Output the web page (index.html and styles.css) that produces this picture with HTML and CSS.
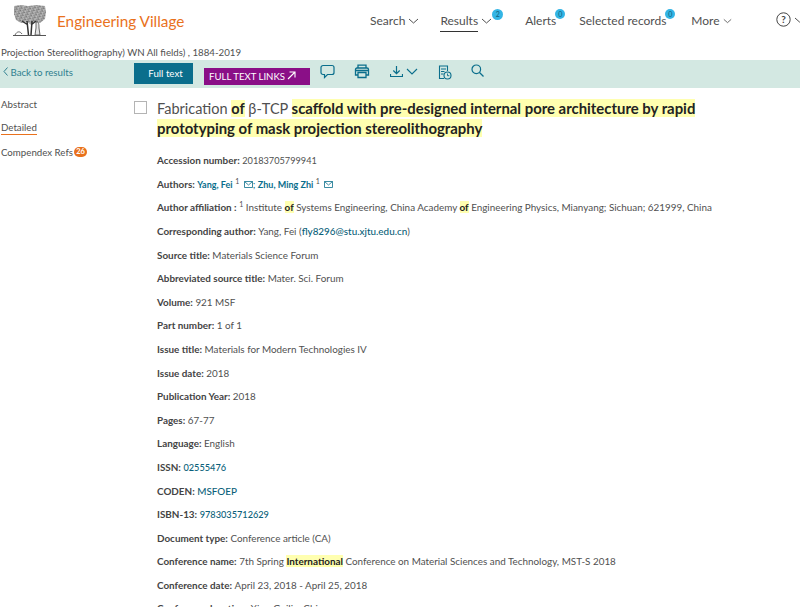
FILE: index.html
```html
<!DOCTYPE html>
<html lang="en">
<head>
<meta charset="utf-8">
<title>Engineering Village</title>
<link rel="stylesheet" href="styles.css">
</head>
<body>
<header class="top">
  <div class="brand">
    <svg class="tree" width="35" height="33" viewBox="0 0 35 33" aria-hidden="true">
      <defs>
        <pattern id="leaf" width="4" height="3" patternUnits="userSpaceOnUse" patternTransform="rotate(25)">
          <rect width="4" height="3" fill="#bdbdbd"/>
          <path d="M0 1h2.500M1.500 2.500h2" stroke="#555" stroke-width=".8"/>
        </pattern>
      </defs>
      <path d="M2 2l6-1 8 1 9-1 8 1 1 6-1 7-5 4-6-1-4 2-3-2-6 1-5-3-2-6z" fill="url(#leaf)"/>
      <path d="M15 17l1.500 14M20 17l-1 14M16 21l-6-4M19 21l5-4" fill="none" stroke="#333" stroke-width="1.500"/>
      <path d="M24 18c3-1 3 3 3 6l1 7h-5l1-7z" fill="#e4e4e4" stroke="#444" stroke-width=".8"/>
      <path d="M1 31.500h33" stroke="#555"/>
      <path d="M3 31c2-4 5-4 7-1" fill="none" stroke="#666"/>
    </svg>
    <span class="brand-name">Engineering Village</span>
  </div>
  <nav class="nav">
    <a class="nav-item nav-search">Search <svg class="chev" width="11" height="6" viewBox="0 0 11 6"><path d="M1 1l4.500 4 4.500-4"/></svg></a>
    <a class="nav-item nav-results"><span class="current">Results</span> <svg class="chev" width="11" height="6" viewBox="0 0 11 6"><path d="M1 1l4.500 4 4.500-4"/></svg><span class="count">2</span></a>
    <a class="nav-item nav-alerts">Alerts<span class="count">0</span></a>
    <a class="nav-item nav-selected">Selected records<span class="count">0</span></a>
    <a class="nav-item">More <svg class="chev" width="9" height="6" viewBox="0 0 11 6"><path d="M1 1l4.500 4 4.500-4"/></svg></a>
    <a class="nav-item help">
      <svg width="15" height="15" viewBox="0 0 15 15"><circle cx="7.500" cy="7.500" r="6.700" fill="none" stroke="#444" stroke-width="1"/><text x="7.500" y="11" text-anchor="middle" class="help-q">?</text></svg>
      <svg class="chev" width="11" height="6" viewBox="0 0 11 6"><path d="M1 1l4.500 4 4.500-4"/></svg>
    </a>
  </nav>
</header>

<p class="query">Projection Stereolithography) WN All fields) , 1884-2019</p>

<div class="toolbar">
  <a class="back"><svg width="5" height="9" viewBox="0 0 5 9"><path d="M4.500 .5L1 4.500l3.500 4" fill="none" stroke="#2f7f8f"/></svg> Back to results</a>
  <a class="btn-full">Full text</a>
  <a class="btn-links">FULL TEXT LINKS <svg width="9" height="9" viewBox="0 0 9 9"><path d="M1 8l7-7M2.500 1H8v5.500" fill="none" stroke="#fff" stroke-width="1.100"/></svg></a>
  <div class="tools">
    <svg class="t-comment" width="15" height="15" viewBox="0 0 15 15"><path d="M3 1.500h9a2 2 0 0 1 2 2v5a2 2 0 0 1-2 2H7.500L4.500 13.500v-3H3a2 2 0 0 1-2-2v-5a2 2 0 0 1 2-2z" fill="none" stroke="#0a6e8c" stroke-width="1.200"/></svg>
    <svg class="t-print" width="16" height="15" viewBox="0 0 16 15"><path d="M4 4V1.200h8V4M4 11H1.500V5.500a1.500 1.500 0 0 1 1.500-1.500h10a1.500 1.500 0 0 1 1.500 1.500V11H12M4 8.500h8v5H4zM1.500 6.500h13" fill="none" stroke="#0a6e8c" stroke-width="1.300"/></svg>
    <span class="t-dl">
      <svg width="13" height="13" viewBox="0 0 13 13"><path d="M6.500 1v7.500M3.300 5.500l3.200 3.200 3.200-3.200M.5 9v2.500h12V9" fill="none" stroke="#0a6e8c" stroke-width="1.200"/></svg>
      <svg width="12" height="7" viewBox="0 0 12 7"><path d="M1 1l5 5 5-5" fill="none" stroke="#0a6e8c" stroke-width="1.100"/></svg>
    </span>
    <svg class="t-hist" width="14" height="15" viewBox="0 0 14 15"><path d="M6 13.500H1.500V1h8v5M3 4h5M3 6.500h3.500M3 9h2.500" fill="none" stroke="#0a6e8c" stroke-width="1.100"/><circle cx="9.500" cy="10.500" r="3.500" fill="none" stroke="#0a6e8c" stroke-width="1.100"/><path d="M9.500 8.500v2.200h1.800" fill="none" stroke="#0a6e8c" stroke-width=".9"/></svg>
    <svg class="t-search" width="13" height="13" viewBox="0 0 13 13"><circle cx="5.300" cy="5.300" r="4.300" fill="none" stroke="#0a6e8c" stroke-width="1.200"/><path d="M8.500 8.500l4 4" stroke="#0a6e8c" stroke-width="1.300"/></svg>
  </div>
</div>

<div class="body">
  <aside class="side">
    <a class="side-link">Abstract</a>
    <a class="side-link active">Detailed</a>
    <a class="side-link">Compendex Refs<span class="refs">26</span></a>
  </aside>
  <main class="record">
    <div class="title-row">
      <span class="check"></span>
      <h1 class="title">Fabrication <b class="hit">of</b> β-TCP <b class="hit hit-title">scaffold with pre-designed internal pore architecture by rapid prototyping of mask projection stereolithography</b></h1>
    </div>
    <dl class="fields">
      <div class="row"><dt>Accession number:</dt> <dd class="num">20183705799941</dd></div>
      <div class="row"><dt>Authors:</dt> <dd><a class="link-sm">Yang, Fei</a> <sup>1</sup> <svg class="mail" width="9" height="7" viewBox="0 0 9 7"><path d="M.5.5h8v6h-8zM.5.500l4 3.500 4-3.500" fill="none" stroke="#0a6e8c" stroke-width=".8"/></svg><span class="semi">;</span> <a class="link-sm">Zhu, Ming Zhi</a> <sup>1</sup> <svg class="mail" width="9" height="7" viewBox="0 0 9 7"><path d="M.5.5h8v6h-8zM.5.500l4 3.500 4-3.500" fill="none" stroke="#0a6e8c" stroke-width=".8"/></svg></dd></div>
      <div class="row"><dt>Author affiliation :</dt> <dd><sup>1</sup> Institute <b class="hit">of</b> Systems Engineering, China Academy <b class="hit">of</b> Engineering Physics, Mianyang; Sichuan; 621999, China</dd></div>
      <div class="row"><dt>Corresponding author:</dt> <dd>Yang, Fei (<a class="link">fly8296@stu.xjtu.edu.cn</a>)</dd></div>
      <div class="row"><dt>Source title:</dt> <dd>Materials Science Forum</dd></div>
      <div class="row"><dt>Abbreviated source title:</dt> <dd>Mater. Sci. Forum</dd></div>
      <div class="row"><dt>Volume:</dt> <dd>921 MSF</dd></div>
      <div class="row"><dt>Part number:</dt> <dd>1 of 1</dd></div>
      <div class="row"><dt>Issue title:</dt> <dd>Materials for Modern Technologies IV</dd></div>
      <div class="row"><dt>Issue date:</dt> <dd>2018</dd></div>
      <div class="row"><dt>Publication Year:</dt> <dd>2018</dd></div>
      <div class="row"><dt>Pages:</dt> <dd>67-77</dd></div>
      <div class="row"><dt>Language:</dt> <dd>English</dd></div>
      <div class="row"><dt>ISSN:</dt> <dd class="num"><a class="link">02555476</a></dd></div>
      <div class="row"><dt>CODEN:</dt> <dd><a class="link">MSFOEP</a></dd></div>
      <div class="row"><dt>ISBN-13:</dt> <dd class="num"><a class="link">9783035712629</a></dd></div>
      <div class="row"><dt>Document type:</dt> <dd>Conference article (CA)</dd></div>
      <div class="row"><dt>Conference name:</dt> <dd>7th Spring <b class="hit">International</b> Conference on Material Sciences and Technology, MST-S 2018</dd></div>
      <div class="row"><dt>Conference date:</dt> <dd>April 23, 2018 - April 25, 2018</dd></div>
      <div class="row"><dt>Conference location:</dt> <dd>Xian-Guilin, China</dd></div>
    </dl>
  </main>
</div>
</body>
</html>
```
FILE: styles.css
```css
* { box-sizing: border-box; }
html, body { margin: 0; height: 607px; overflow: hidden; background: #fff; }
body { font-family: Lato, "Open Sans", sans-serif; color: #505050; font-size: 9.900px; }
a { color: inherit; text-decoration: none; }

.top { height: 45px; display: flex; align-items: flex-start; }
.brand { width: 370px; flex: none; display: flex; align-items: flex-start; padding: 4px 0 0 12px; }
.tree { display: block; flex: none; }
.brand-name { color: #e9711c; font-size: 15.300px; margin: 7px 0 0 10px; line-height: 20px; white-space: nowrap; }

.nav { display: flex; align-items: flex-start; font-size: 12px; padding-top: 12px; }
.nav-item { position: relative; line-height: 17px; white-space: nowrap; margin-right: 24px; }
.nav-search { margin-right: 21px; }
.nav-results { margin-right: 33px; }
.nav-alerts { margin-right: 23px; }
.nav-selected { margin-right: 25px; }
.current { border-bottom: 1px solid #333; padding-bottom: 2px; display: inline-block; }
.chev { fill: none; stroke: #505050; stroke-width: 1; display: inline-block; vertical-align: 1px; }
.help { display: flex; align-items: center; gap: 3px; margin: 0 -9px 0 20px; }
.help-q { font: bold 10px Lato, sans-serif; fill: #444; }
.count {
  position: absolute; top: -3px; right: -9px; width: 10px; height: 10px; border-radius: 50%;
  background: #33b5e5; color: #12607a; font-size: 7px; line-height: 10px; text-align: center;
}
.nav-results .count { right: -11px; width: 11px; height: 11px; line-height: 11px; }

.query { margin: 0; height: 15px; padding-left: 1px; line-height: 15px; font-size: 9.700px; white-space: nowrap; }

.toolbar { height: 28px; background: #d3e8e2; display: flex; align-items: flex-start; }
.back { width: 134px; flex: none; padding: 6px 0 0 3px; font-size: 9.700px; color: #2f7f8f; line-height: 12px; }
.btn-full { width: 59px; height: 21px; margin-top: 3px; padding-left: 4px; background: #0a6e8c; color: #fff; font-size: 9.700px; line-height: 20px; text-align: center; flex: none; }
.btn-links { width: 106px; height: 17px; margin: 8px 0 0 11px; padding-left: 5px; background: #8a0f87; color: #fff; font-size: 9.600px; line-height: 17px; flex: none; white-space: nowrap; }
.tools { flex: 1; display: flex; align-items: flex-start; padding-left: 10px; }
.t-comment { margin-top: 4px; }
.t-print { margin: 4px 0 0 19px; }
.t-dl { display: flex; align-items: center; gap: 3px; margin: 5px 0 0 20px; }
.t-hist { margin: 5px 0 0 20px; }
.t-search { margin: 4px 0 0 19px; }

.body { display: flex; }
.side { width: 134px; flex: none; padding: 9px 0 0 1px; display: flex; flex-direction: column; align-items: flex-start; gap: 9.300px; font-size: 9.700px; }
.side-link { line-height: 14px; white-space: nowrap; }
.active { border-bottom: 1px solid #e9711c; }
.refs { display: inline-block; width: 13px; height: 10px; border-radius: 5px; background: #e9711c; color: #fff; font-size: 7.500px; line-height: 10px; text-align: center; vertical-align: 2px; margin-left: 1px; font-weight: 700; }

.record { flex: 1; min-width: 0; }
.title-row { display: flex; padding-top: 11px; }
.check { width: 13px; height: 13px; border: 1px solid #b4b4b4; margin-top: 2px; flex: none; }
.title { margin: 0 0 0 10px; font-size: 14.500px; line-height: 19.600px; font-weight: 400; width: 560px; }
.hit { background: #ffffb0; color: #222; font-weight: 700; }
.hit-title { font-size: 14.900px; }

.fields { margin: 15px 0 0 23px; }
.row { height: 23.600px; line-height: 14px; white-space: nowrap; }
dt, dd { display: inline; margin: 0; }
dt { font-weight: 700; color: #444; }
.num { font-size: 9.200px; }
sup { font-size: 7px; line-height: 0; vertical-align: 4px; }
.link { color: #0a5f7a; font-weight: 500; }
.link-sm { color: #0a6e8c; font-size: 9px; font-weight: 700; }
.semi { color: #0a6e8c; }
.mail { margin-left: 2px; vertical-align: 0; }
```
